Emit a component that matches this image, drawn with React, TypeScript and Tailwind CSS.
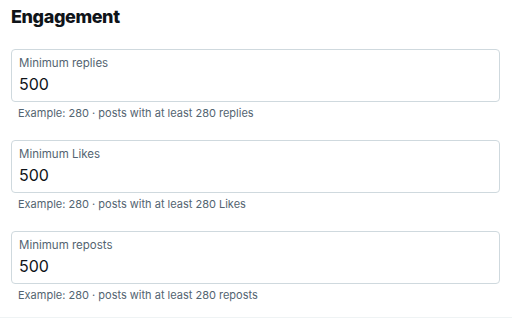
import React from "react";

const fields = [
  { label: "Minimum replies", noun: "replies" },
  { label: "Minimum Likes", noun: "Likes" },
  { label: "Minimum reposts", noun: "reposts" },
];

export default function App() {
  return (
    <div
      className="h-[323px] w-[512px] overflow-hidden bg-white text-[#0f1419]"
      style={{ fontFamily: "Inter, 'Noto Sans', sans-serif" }}
    >
      <div className="px-[11px] pt-[5px]">
        <h2 className="text-[18px] font-extrabold leading-[24px] tracking-[-0.4px]">Engagement</h2>
        <div className="mt-[20px] flex flex-col gap-[19px]">
          {fields.map((f) => (
            <div key={f.label}>
              <div className="h-[53px] w-[489px] rounded-[4px] border border-[#cfd9de] px-[7px] pt-[6px]">
                <div className="text-[11.5px] leading-[14px] text-[#536471]">{f.label}</div>
                <div className="mt-[4px] text-[16px] leading-[20px]">500</div>
              </div>
              <div className="mt-[3px] pl-[7px] text-[11px] leading-[16px] text-[#536471]">
                Example: 280 · posts with at least 280 {f.noun}
              </div>
            </div>
          ))}
        </div>
      </div>
      <div className="mt-[14px] h-px w-full bg-[#eff3f4]" />
    </div>
  );
}
